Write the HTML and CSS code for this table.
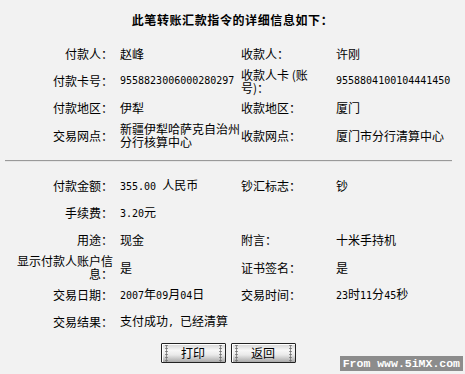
FILE: index.html
```html
<!DOCTYPE html>
<html lang="zh-CN">
<head>
<meta charset="utf-8">
<title>转账汇款详细信息</title>
<link rel="stylesheet" href="styles.css">
</head>
<body>
<div class="page">
  <h1 class="title">此笔转账汇款指令的详细信息如下：</h1>

  <table class="info">
    <tr>
      <td class="lbl">付款人：</td><td class="val">赵峰</td>
      <td class="lbl2">收款人：</td><td class="val2">许刚</td>
    </tr>
    <tr>
      <td class="lbl">付款卡号：</td><td class="val num">9558823006000280297</td>
      <td class="lbl2">收款人卡 (账号)：</td><td class="val2 num">9558804100104441450</td>
    </tr>
    <tr>
      <td class="lbl">付款地区：</td><td class="val">伊犁</td>
      <td class="lbl2">收款地区：</td><td class="val2">厦门</td>
    </tr>
    <tr class="tall">
      <td class="lbl">交易网点：</td><td class="val">新疆伊犁哈萨克自治州分行核算中心</td>
      <td class="lbl2">收款网点：</td><td class="val2">厦门市分行清算中心</td>
    </tr>
  </table>

  <hr class="rule">

  <table class="info">
    <tr>
      <td class="lbl">付款金额：</td><td class="val"><span class="num">355.00 </span>人民币</td>
      <td class="lbl2">钞汇标志：</td><td class="val2">钞</td>
    </tr>
    <tr>
      <td class="lbl">手续费：</td><td class="val"><span class="num">3.20</span>元</td>
      <td class="lbl2"></td><td class="val2"></td>
    </tr>
    <tr>
      <td class="lbl">用途：</td><td class="val">现金</td>
      <td class="lbl2">附言：</td><td class="val2">十米手持机</td>
    </tr>
    <tr class="tall">
      <td class="lbl">显示付款人账户信息：</td><td class="val">是</td>
      <td class="lbl2">证书签名：</td><td class="val2">是</td>
    </tr>
    <tr>
      <td class="lbl">交易日期：</td><td class="val"><span class="num">2007</span>年<span class="num">09</span>月<span class="num">04</span>日</td>
      <td class="lbl2">交易时间：</td><td class="val2"><span class="num">23</span>时<span class="num">11</span>分<span class="num">45</span>秒</td>
    </tr>
    <tr>
      <td class="lbl">交易结果：</td><td class="val">支付成功<span class="num">, </span>已经清算</td>
      <td class="lbl2"></td><td class="val2"></td>
    </tr>
  </table>

  <div class="actions">
    <button class="btn" type="button">打印</button>
    <button class="btn" type="button">返回</button>
  </div>

  <div class="stamp">From www.5iMX.com</div>
</div>
</body>
</html>
```

FILE: styles.css
```css
html, body {
  margin: 0;
  padding: 0;
  background: #f2f2f2;
}

.page {
  position: relative;
  width: 465px;
  height: 374px;
  overflow: hidden;
  font-family: "Noto Sans CJK SC", "DejaVu Sans", sans-serif;
  font-size: 12px;
  color: #000;
}

.title {
  margin: 0;
  padding: 13px 0 0;
  height: 27px;
  font-size: 12px;
  line-height: 14px;
  font-weight: bold;
  letter-spacing: 0.6px;
  text-align: center;
}

.info {
  border-collapse: collapse;
  table-layout: fixed;
}

.info td {
  height: 27px;
  padding: 0;
  line-height: 13px;
  vertical-align: middle;
}

.info tr.tall td {
  height: 28px;
}

/* left label column: right-aligned captions */
.lbl {
  width: 100px;
  padding-left: 13px !important;
  padding-right: 3px !important;
  text-align: right;
}

.val {
  width: 120px;
  padding-left: 4px !important;
}

/* right label column: left-aligned captions */
.lbl2 {
  width: 80px;
  padding-left: 1px !important;
  padding-right: 15px !important;
}

.val2 {
  width: 120px;
}

.num {
  font-family: "DejaVu Sans Mono", "Liberation Mono", monospace;
  font-size: 10px;
  white-space: pre;
}

.rule {
  margin: 11px 13px 10px 5px;
  height: 0;
  border: 0;
  border-top: 1px solid #9a9a9a;
  border-bottom: 1px solid #e6e6e6;
}

.actions {
  display: flex;
  justify-content: center;
  gap: 5px;
  padding: 8px 9px 0 0;
}

.btn {
  width: 65px;
  height: 20px;
  padding: 0;
  font-family: "Noto Sans CJK SC", sans-serif;
  font-size: 12px;
  line-height: 16px;
  color: #000;
  border: 1px solid #222;
  border-radius: 1px;
  background:
    radial-gradient(circle, #777 45%, transparent 55%) 3px 3px / 3px 3px repeat-y,
    radial-gradient(circle, #777 45%, transparent 55%) right 3px top 3px / 3px 3px repeat-y,
    linear-gradient(#d4d4d4, #f7f7f7 35%, #eaeaea 60%, #a9a9a9);
  background-size: 3px 3px, 3px 3px, auto;
  background-clip: padding-box;
  box-shadow: inset 1px 1px 0 #fff;
}

/* site watermark in the lower right corner */
.stamp {
  position: absolute;
  right: 2px;
  bottom: 3px;
  padding: 1px 3px;
  background: #8c8c8c;
  color: #fff;
  font-family: "Liberation Mono", "Courier New", monospace;
  font-weight: bold;
  font-size: 11.5px;
  line-height: 13px;
}
```
